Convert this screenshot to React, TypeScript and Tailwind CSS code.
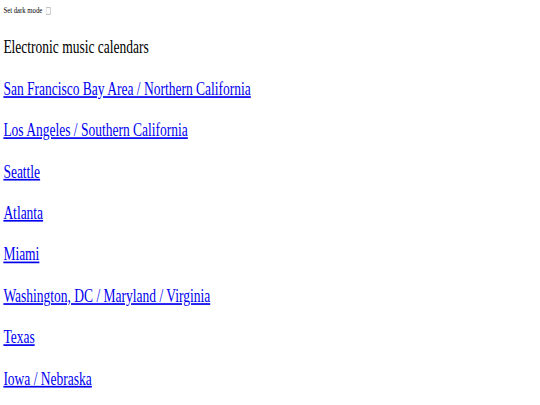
import React from "react";

const links = [
  "San Francisco Bay Area / Northern California",
  "Los Angeles / Southern California",
  "Seattle",
  "Atlanta",
  "Miami",
  "Washington, DC / Maryland / Virginia",
  "Texas",
  "Iowa / Nebraska",
];

export default function App() {
  return (
    <div className="w-[540px] h-[405px] overflow-hidden bg-white">
      <div className="w-[1280px] h-[720px] origin-top-left scale-x-[0.421875] scale-y-[0.5625] p-2 font-['Liberation_Serif',serif] text-black">
        <label className="block text-[16px] leading-[19px]">
          Set dark mode{" "}
          <input type="checkbox" className="ml-[4px] mr-[3px] my-[3px] w-[13px] h-[13px] align-[-3px]" />
        </label>
        <div className="mt-[37px] flex flex-col items-start gap-[36.8px] text-[32px] leading-[36.8px]">
          <h1 className="font-normal">Electronic music calendars</h1>
          {links.map((l) => (
            <a key={l} href="#" className="text-[#0000ee] underline">
              {l}
            </a>
          ))}
        </div>
      </div>
    </div>
  );
}
